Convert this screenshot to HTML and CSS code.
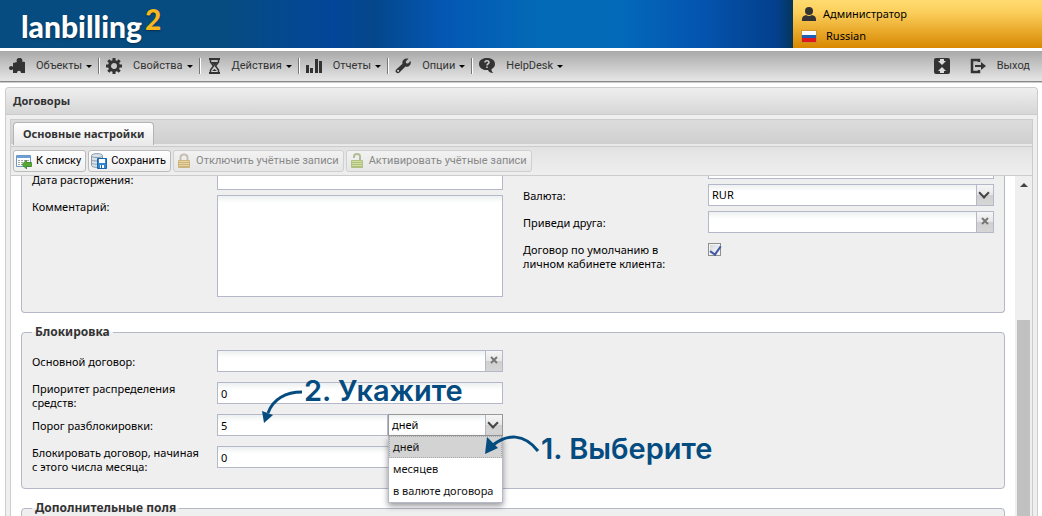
FILE: index.html
```
<!DOCTYPE html>
<html lang="ru">
<head>
  <meta charset="UTF-8">
  <title>LANBilling 2 - Договоры</title>
  <link rel="stylesheet" href="styles.css">
</head>
<body>
<header class="header">
  <div class="brand"><div class="logo">lanbilling<sup>2</sup></div></div>
  <div class="user">
    <div class="user-row">
      <svg width="16" height="16" viewBox="0 0 16 16" fill="#333"><circle cx="8" cy="5" r="4"/><path d="M1 15v-2q0-3 4-4 3 2 6 0 4 1 4 4v2z"/></svg>
      <span>Администратор</span>
    </div>
    <div class="user-row">
      <svg width="16" height="13" viewBox="0 0 16 13"><path fill="#fff" d="M1 1h14v4H1z"/><path fill="#1d5fb4" d="M1 5h14v3H1z"/><path fill="#e0191f" d="M1 8h14v4H1z"/><path fill="none" stroke="#b98a3c" stroke-opacity=".6" d="M.5.5h15v12H.5z"/></svg>
      <span class="lang">Russian</span>
    </div>
  </div>
</header>

<nav class="menu">
  <button class="menu-item">
    <svg width="16" height="16" viewBox="0 0 16 16"><path d="M4 5l4-1c-1-2 0-4 2.500-4S14 2 13 3.500l3 .5v11h-4c0-3-4-3-4 0H4v-4c-1 2-4 1-4-1s3-3 4-1z"/></svg>
    <span>Объекты</span><i class="caret"></i>
  </button>
  <button class="menu-item">
    <svg width="16" height="16" viewBox="0 0 16 16"><circle cx="8" cy="8" r="4.500" fill="none" stroke="#333" stroke-width="3"/><path d="M8 0v3M8 13v3M0 8h3M13 8h3M2.300 2.300l2.200 2.200M11.500 11.500l2.200 2.200M13.700 2.300l-2.200 2.200M4.500 11.500l-2.200 2.200" stroke="#333" stroke-width="3"/></svg>
    <span>Свойства</span><i class="caret"></i>
  </button>
  <button class="menu-item">
    <svg width="14" height="16" viewBox="1 0 14 16"><path d="M3 1h11M3 15h11" stroke="#333" stroke-width="2"/><path d="M4.500 2v2l3 4-3 4v2M12.500 2v2l-3 4 3 4v2" fill="none" stroke="#333" stroke-width="1.500"/><path d="M5 4h7L8.500 8zM6 13l2.500-2 2.500 2z"/></svg>
    <span>Действия</span><i class="caret"></i>
  </button>
  <button class="menu-item">
    <svg width="16" height="16" viewBox="0 0 16 16"><path d="M0 7h3v8H0zM4 10h3v5H4zM9 1h3v14H9zM13 3h3v12h-3z"/></svg>
    <span>Отчеты</span><i class="caret"></i>
  </button>
  <button class="menu-item">
    <svg width="16" height="16" viewBox="0 0 16 16"><path d="M13.500.7 10.800 3.300l.3 1.900 1.900.3 2.500-2.500c1.300 3.500-1.700 6.500-5 5.500l-6.300 6.300c-1.500 1.500-5-.8-3.200-3.100L7.500 5.800C6.500 2 10-.5 13.500.7zM2.500 12a1 1 0 1 0 1.400 1.400A1 1 0 0 0 2.500 12z"/></svg>
    <span>Опции</span><i class="caret"></i>
  </button>
  <button class="menu-item">
    <svg width="16" height="16" viewBox="0 0 16 16"><path d="M8 0c5 0 8 2.500 8 6 0 2.500-1.500 4-3.500 5 0 2 .5 3 2 4-3 0-5-1-5.500-3C4 12.500 0 10 0 6c0-3.500 3-6 8-6z"/><path d="M6 4.500C6 2 10 2 10 4.500 10 6 8 5.500 8 7.500M8 8.500V10" fill="none" stroke="#ccc" stroke-width="1.500"/></svg>
    <span>HelpDesk</span><i class="caret"></i>
  </button>
  <div class="menu-right">
    <button class="menu-item" aria-label="Свернуть">
      <svg width="16" height="16" viewBox="0 0 16 16"><rect width="16" height="16" rx="2"/><path fill="#ddd" d="M6 1h4v2h2L8 7 4 3h2zM6 15h4v-2h2L8 9l-4 4h2z"/></svg>
    </button>
    <button class="menu-item">
      <svg width="16" height="16" viewBox="0 0 16 16"><path d="M9 4V2H2v12h7v-2" fill="none" stroke="#333" stroke-width="2.500"/><path d="M5 7h6V4l5 4-5 4V9H5z"/></svg>
      <span>Выход</span>
    </button>
  </div>
</nav>

<main class="panel">
  <h1 class="panel-title">Договоры</h1>
  <div class="panel-body">
    <div class="tabs"><button class="tab">Основные настройки</button></div>
    <div class="toolbar">
      <button class="btn">
        <svg width="16" height="16" viewBox="0 0 16 16"><path fill="#fff" stroke="#6f97c4" d="M.5 2.500h14v11H.5z"/><path fill="#6c9fd8" d="M1 3h13v2H1z"/><path stroke="#a3a3a3" stroke-dasharray="2 1" d="M2 7.500h11M2 9.500h11M2 11.500h6"/><path fill="#55a832" stroke="#2f7d1b" stroke-width=".7" d="M6 11.500 10.500 7v2.500h5v4h-5V16z"/></svg>
        К списку
      </button>
      <button class="btn">
        <svg width="16" height="16" viewBox="0 0 16 16"><path fill="#dbe3e9" stroke="#8b9dab" d="M.5 2.500v10c0 2.500 11 2.500 11 0v-10c0-2.500-11-2.500-11 0z"/><path fill="none" stroke="#8b9dab" d="M.5 3c0 2 11 2 11 0M.5 6.500c0 2 11 2 11 0M.5 9.500c0 2 6 2 6 1.500"/><path fill="#3287d0" stroke="#1765ab" d="M6.500 5.500h9v10h-9z"/><path fill="#fff" d="M8 6h6v4H8zM9 12h4v3H9z"/><path fill="#1765ab" d="M10 12h1v3h-1z"/></svg>
        Сохранить
      </button>
      <button class="btn" disabled>
        <svg width="16" height="16" viewBox="0 0 16 16"><path fill="none" stroke="#aaa189" stroke-width="2" d="M4.500 8V4.500c0-4 7-4 7 0V8"/><path fill="#e9c568" stroke="#b99038" d="M2.500 7.500h11v7h-11z"/><path stroke="#b99038" d="M3 9.500h10M3 11.500h10M3 13.500h10"/></svg>
        Отключить учётные записи
      </button>
      <button class="btn" disabled>
        <svg width="16" height="16" viewBox="0 0 16 16"><path fill="none" stroke="#8d9f62" stroke-width="2" d="M5 5V3.500C5 0 11 0 11 3.500V8"/><path fill="#c3d96a" stroke="#8aa53b" d="M2.500 7.500h11v7h-11z"/><path stroke="#8aa53b" d="M3 9.500h10M3 11.500h10M3 13.500h10"/></svg>
        Активировать учётные записи
      </button>
    </div>

    <div class="content">
      <form class="form">
        <fieldset class="group group-top">
          <div class="col col-left">
            <div class="field">
              <label for="endDate">Дата расторжения:</label>
              <input class="text" id="endDate" type="text">
            </div>
            <div class="field">
              <label for="comment">Комментарий:</label>
              <textarea class="text" id="comment"></textarea>
            </div>
          </div>
          <div class="col col-right">
            <div class="field">
              <label for="extra"></label>
              <input class="text" id="extra" type="text" aria-label="Номер">
            </div>
            <div class="field">
              <label for="currency">Валюта:</label>
              <div class="combo">
                <select class="text" id="currency"><option>RUR</option></select>
              </div>
            </div>
            <div class="field">
              <label for="friend">Приведи друга:</label>
              <div class="combo">
                <input class="text" id="friend" type="text">
                <button class="clear" type="button" aria-label="Очистить"><svg width="8" height="8" viewBox="0 0 8 8"><path d="m1 1 6 6M7 1 1 7"/></svg></button>
              </div>
            </div>
            <div class="field">
              <label for="byDefault">Договор по умолчанию в личном кабинете клиента:</label>
              <input class="check" id="byDefault" type="checkbox" checked>
            </div>
          </div>
        </fieldset>

        <fieldset class="group">
          <legend>Блокировка</legend>
          <div class="col col-wide">
            <div class="field">
              <label for="mainContract">Основной договор:</label>
              <div class="combo">
                <input class="text" id="mainContract" type="text">
                <button class="clear" type="button" aria-label="Очистить"><svg width="8" height="8" viewBox="0 0 8 8"><path d="m1 1 6 6M7 1 1 7"/></svg></button>
              </div>
            </div>
            <div class="field field-double">
              <label for="priority">Приоритет распределения средств:</label>
              <input class="text" id="priority" type="text" value="0">
            </div>
            <div class="field">
              <label for="threshold">Порог разблокировки:</label>
              <input class="text" id="threshold" type="text" value="5">
              <div class="combo unit">
                <select class="text" id="unit" aria-label="Единица">
                  <option>дней</option>
                  <option>месяцев</option>
                  <option>в валюте договора</option>
                </select>
                <ul class="list">
                  <li class="selected">дней</li>
                  <li>месяцев</li>
                  <li>в валюте договора</li>
                </ul>
                <div class="note note-select">
                  <svg width="58" height="36" viewBox="0 0 58 36"><path class="line" d="M55 20C41 2 24 3 10 14"/><path class="head" d="M2 23 4 6l11 11z"/></svg>
                  <span>1. Выберите</span>
                </div>
                <div class="note note-enter">
                  <svg width="44" height="36" viewBox="0 0 44 36"><path class="line" d="M42 3C26 3 13 10 8 24"/><path class="head" d="M4 34 2 22l11 4z"/></svg>
                  <span>2. Укажите</span>
                </div>
              </div>
            </div>
            <div class="field field-double">
              <label for="blockDay">Блокировать договор, начиная с этого числа месяца:</label>
              <input class="text" id="blockDay" type="text" value="0">
            </div>
          </div>
        </fieldset>

        <fieldset class="group">
          <legend>Дополнительные поля</legend>
        </fieldset>
      </form>
      <div class="scrollbar"><i class="scroll-up"></i><i class="thumb"></i></div>
    </div>
  </div>
</main>
</body>
</html>
```
FILE: styles.css
```
* { box-sizing: border-box; }
body { margin: 0; height: 100vh; display: flex; flex-direction: column; overflow: hidden; background: #fff; color: #111; font: 11px/14px "Noto Sans", sans-serif; }
button, input, select, textarea { font: inherit; color: inherit; margin: 0; }
svg { flex: none; display: block; }

.header { display: flex; flex: none; height: 48px; }
.brand { flex: 1; display: flex; align-items: center; padding: 4px 0 0 21px; background: linear-gradient(90deg, #064c80 0%, #064c80 28%, #03469a 42%, #04478a 47%, #0457b4 56%, #036ab6 68%, #036ab9 78%, #0455b0 88%, #043f8c 98%, #04365c 100%); }
.logo { color: #fff; font: 900 30px/40px Lato, sans-serif; text-shadow: 0 1px 2px #0006; }
.logo sup { color: #f7b71d; font-size: 28px; line-height: 0; vertical-align: 8px; margin-left: 3px; }
.user { width: 249px; padding: 6px 8px; display: flex; flex-direction: column; gap: 7px; background: linear-gradient(#ffdb70, #fccf5c 25%, #d88800); }
.user-row { display: flex; align-items: center; gap: 6px; height: 16px; color: #000; }
.lang { padding-left: 3px; }

.menu { display: flex; flex: none; align-items: center; height: 31px; margin-top: 3px; padding: 0 6px 0 2px; background: linear-gradient(#a9a9a9, #e6e6e6); border-bottom: 1px solid #888; box-shadow: 0 1px #ccc; font-family: Roboto, sans-serif; }
.menu-item { display: flex; align-items: center; height: 16px; padding: 0 6px 0 7px; border: 0; background: none; color: #333; fill: #333; }
.menu-item span { padding-left: 11px; }
.menu > .menu-item + .menu-item { box-shadow: inset 1px 0 #777, inset 2px 0 #fff; padding-left: 8px; }
.caret { margin-left: 4px; border: 3px solid transparent; border-top-color: #000; border-bottom: 0; }
.menu-right { display: flex; margin-left: auto; gap: 7px; }

.panel { flex: 1; min-height: 0; display: flex; flex-direction: column; margin: 5px 4px 0 5px; border: 1px solid #ccc; border-bottom: 0; border-radius: 4px 4px 0 0; background: #efefef; }
.panel-title { margin: 0; padding: 6px 7px; border-bottom: 1px solid #ccc; border-radius: 4px 4px 0 0; background: linear-gradient(#efefef, #d6d6d6); color: #333; font-size: 11px; line-height: 14px; }
.panel-body { flex: 1; min-height: 0; display: flex; flex-direction: column; margin: 4px 4px 0; border: 1px solid #ccc; border-bottom: 0; }
.tabs { flex: none; height: 27px; padding: 2px 2px 0; background: linear-gradient(#dcdcdc, #cfcfcf 24px, #e9e9e9 24px); border-bottom: 1px solid #ccc; }
.tab { height: 23px; padding: 0 9px; border: 1px solid #b4b4b4; border-bottom: 0; border-radius: 4px 4px 0 0; background: linear-gradient(#fff, #e9e9e9); color: #333; font-weight: bold; }
.toolbar { flex: none; display: flex; gap: 2px; padding: 3px 2px; border-bottom: 1px solid #ccc; background: linear-gradient(#e2e2e2, #efefef); font-family: Roboto, sans-serif; }
.btn { display: flex; align-items: center; gap: 4px; height: 22px; padding: 0 4px 0 2px; border: 1px solid #bbb; border-radius: 3px; background: linear-gradient(#fff, #efefef); color: #000; white-space: nowrap; }
.btn:disabled { border-color: #d0d0d0; background: linear-gradient(#f2f2f2, #e6e6e6); color: #888; }
.btn:disabled svg { opacity: .6; }

.content { flex: 1; min-height: 0; display: flex; }
.form { flex: 1; overflow: hidden; padding: 0 10px; background: #fff; }
.group { margin: 0 0 12px; padding: 11px 10px 20px; border: 1px solid #b5b8c8; border-radius: 4px; background: #efefef; }
.group legend { padding: 0 3px; color: #333; font-size: 12px; font-weight: bold; line-height: 14px; }
.group-top { display: grid; grid-template-columns: 1fr 1fr; gap: 20px; padding: 0 10px 15px; border-top: 0; border-radius: 0 0 4px 4px; }
.col { display: flex; flex-direction: column; gap: 5px; }
.col-left { margin-top: -8px; }
.col-right { margin-top: -19px; }
.col-wide { width: calc(50% - 10px); gap: 10px; }
.field { display: flex; min-height: 22px; }
.field label { flex: none; width: 185px; padding: 5px 14px 0 0; color: #000; }
.field-double { height: 22px; }
.field .text { flex: 1; }
.field-double label { padding-top: 0; }
.text { width: 100%; min-width: 0; height: 22px; padding: 1px 3px; border: 1px solid #b5b8c8; border-radius: 0; background: linear-gradient(#eef1f1, #fff 7px); color: #000; outline: 0; }
textarea.text { height: 102px; resize: none; }
.combo { position: relative; flex: 1; display: flex; min-width: 0; }
.clear { width: 17px; height: 22px; padding: 0 0 3px 4px; border: 1px solid #b5b8c8; border-left: 0; background: linear-gradient(#f6f6f6, #e6e6e6 50%, #cfcfcf 50%, #d6d6d6); }
.clear svg { fill: none; stroke: #777; stroke-width: 2; }
select.text { appearance: none; background: linear-gradient(#f6f6f6, #e6e6e6 50%, #cfcfcf 50%, #d6d6d6) right / 16px 100% no-repeat, linear-gradient(#b5b8c8, #b5b8c8) right / 17px 100% no-repeat, linear-gradient(#eef1f1, #fff 7px); }
/* chevron on the select trigger */
.combo:has(select)::after { content: ""; position: absolute; top: 5px; right: 6px; width: 6px; height: 6px; border: solid #444; border-width: 0 2px 2px 0; transform: rotate(45deg); pointer-events: none; }
.check { appearance: none; width: 13px; height: 13px; margin-top: 5px; border: 1px solid #8e8f8f; background: linear-gradient(135deg, #cfd3da, #fff); box-shadow: inset 0 0 0 1px #f4f4f4; }
.check:checked::before { content: ""; display: block; width: 5px; height: 9px; margin: 0 0 0 3px; border: solid #4359a4; border-width: 0 2px 2px 0; transform: rotate(35deg); }

.field .unit { flex: 0 0 115px; }
.unit .text { border-color: #999; }
.list { position: absolute; z-index: 1; top: 22px; left: 0; right: 0; margin: 0; padding: 0; list-style: none; border: 1px solid #b5b8c8; border-top: 0; background: #fff; box-shadow: 0 3px 6px #0006; white-space: nowrap; }
.list li { height: 22px; padding: 4px; }
.list .selected { outline: 1px dotted #aaa; outline-offset: -1px; background: #d3d3d3; }

.note { position: absolute; z-index: 2; display: flex; color: #044b80; font: 600 29px/36px Inter, sans-serif; white-space: nowrap; pointer-events: none; }
.note-select { top: 17px; left: 95px; }
.note-enter { top: -41px; left: -128px; }
.note-enter svg { margin-top: 16px; }
.note .line { fill: none; stroke: #044b80; stroke-width: 3; }
.note .head { fill: #044b80; }

.scrollbar { flex: none; width: 17px; padding: 7px 2px 0; display: flex; flex-direction: column; align-items: center; background: #efefef; }
.scroll-up { border: 4px solid transparent; border-top: 0; border-bottom-color: #444; }
.thumb { flex: 1; width: 13px; margin-top: 133px; background: #c1c1c1; }
```
